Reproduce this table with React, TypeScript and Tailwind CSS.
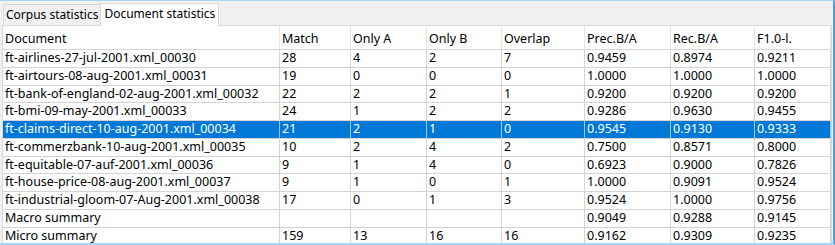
import React from 'react';

const columns = ['Document', 'Match', 'Only A', 'Only B', 'Overlap', 'Prec.B/A', 'Rec.B/A', 'F1.0-l.'];

const rows: string[][] = [
  ['ft-airlines-27-jul-2001.xml_00030', '28', '4', '2', '7', '0.9459', '0.8974', '0.9211'],
  ['ft-airtours-08-aug-2001.xml_00031', '19', '0', '0', '0', '1.0000', '1.0000', '1.0000'],
  ['ft-bank-of-england-02-aug-2001.xml_00032', '22', '2', '2', '1', '0.9200', '0.9200', '0.9200'],
  ['ft-bmi-09-may-2001.xml_00033', '24', '1', '2', '2', '0.9286', '0.9630', '0.9455'],
  ['ft-claims-direct-10-aug-2001.xml_00034', '21', '2', '1', '0', '0.9545', '0.9130', '0.9333'],
  ['ft-commerzbank-10-aug-2001.xml_00035', '10', '2', '4', '2', '0.7500', '0.8571', '0.8000'],
  ['ft-equitable-07-auf-2001.xml_00036', '9', '1', '4', '0', '0.6923', '0.9000', '0.7826'],
  ['ft-house-price-08-aug-2001.xml_00037', '9', '1', '0', '1', '1.0000', '0.9091', '0.9524'],
  ['ft-industrial-gloom-07-Aug-2001.xml_00038', '17', '0', '1', '3', '0.9524', '1.0000', '0.9756'],
  ['Macro summary', '', '', '', '', '0.9049', '0.9288', '0.9145'],
  ['Micro summary', '159', '13', '16', '16', '0.9162', '0.9309', '0.9235'],
];

const SELECTED = 4;

const App: React.FC = () => {
  return (
    <div
      className="w-[835px] h-[245px] overflow-hidden bg-[#f0f0f0] border-t border-b-2 border-r-2 border-t-[#a9d3f2] border-b-[#a9d3f2] border-r-[#4aa0e6] flex flex-col text-[12px] text-black"
      style={{ fontFamily: '"Noto Sans", "Open Sans", sans-serif' }}
    >
      <div className="h-[24px] flex items-end pl-[3px] shrink-0">
        <div className="h-[21px] px-[2px] flex items-center border border-b-0 border-[#d9d9d9] bg-[#f0f0f0] leading-none">
          Corpus statistics
        </div>
        <div className="h-[23px] px-[3px] -ml-px flex items-center border border-b-0 border-[#d9d9d9] bg-white leading-none pb-[3px] relative top-px">
          Document statistics
        </div>
      </div>
      <div className="flex-1 ml-[2px] mr-[1px] border border-b-0 border-[#d9d9d9] bg-white overflow-hidden text-[12.5px]">
        <div className="grid grid-cols-[277px_71px_76px_75px_83px_86px_84px_1fr]">
          {columns.map((c) => (
            <div
              key={c}
              className="h-[24px] flex items-center pl-[2px] pt-[3px] border-b border-[#d5d5d5] border-r border-r-[#e5e5e5] whitespace-nowrap"
            >
              {c}
            </div>
          ))}
          {rows.map((r, i) =>
            r.map((v, j) => (
              <div
                key={`${i}-${j}`}
                className={`h-[17.75px] flex items-center pl-[2px] border-b border-r border-[#d4d4d4] whitespace-nowrap ${
                  i === SELECTED ? 'bg-[#0078d7] text-white border-r-[#9cc7ee]' : ''
                }`}
              >
                {v}
              </div>
            ))
          )}
        </div>
      </div>
    </div>
  );
};

export default App;
